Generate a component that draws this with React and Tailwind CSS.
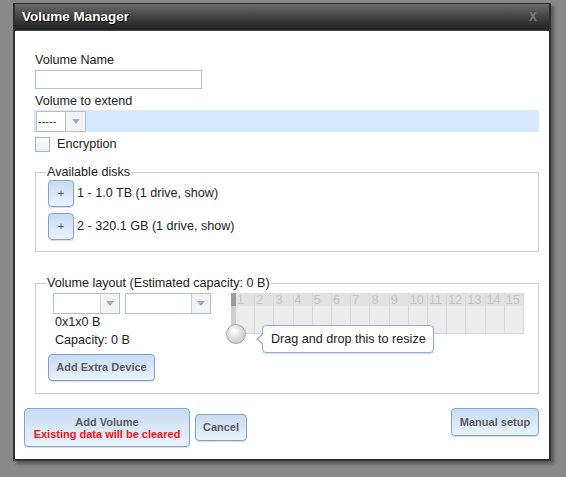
const FONT = { fontFamily: "'Liberation Sans', Arial, sans-serif" };

const btn =
  "border border-[#7fa3cb] rounded-[4px] bg-gradient-to-b from-[#c7dbf2] to-[#eaf3fd] shadow-[0_1px_1px_rgba(0,0,0,0.15)] text-[#5b5b5b] font-bold text-[11px] whitespace-nowrap";

function Arrow() {
  return (
    <svg width="8" height="5" viewBox="0 0 8 5">
      <path d="M0 0h8L4 5z" fill="#9aaec6" />
    </svg>
  );
}

function Select({ w, text }) {
  return (
    <div className="flex h-[21px] border border-[#b8bec9] bg-white" style={{ width: w }}>
      <div className="flex-1 text-[11px] leading-[19px] pl-[2px] text-[#333]">{text}</div>
      <div className="w-[19px] flex items-center justify-center bg-[#f3f3f3] border-l border-[#cfd3d8]">
        <Arrow />
      </div>
    </div>
  );
}

export default function App() {
  const cols = Array.from({ length: 15 }, (_, i) => i + 1);
  return (
    <div className="w-[566px] h-[477px] bg-[#898989] pt-[3px] pl-[13px] overflow-hidden" style={FONT}>
      <div className="w-[538px] h-[458px] border-[2px] border-[#2f2f2f] border-t-[1px] bg-white shadow-[3px_3px_3px_rgba(0,0,0,0.35)] flex flex-col">
        {/* title bar */}
        <div className="h-[27px] bg-gradient-to-b from-[#6a6a6a] to-[#202020] flex items-center justify-between pl-[7px] pr-[12px] border-b border-[#444]">
          <span className="text-white font-bold text-[13.5px] [text-shadow:1px_1px_1px_#000]">Volume Manager</span>
          <span className="text-[#7a7a7a] font-bold text-[12px]">X</span>
        </div>

        {/* body */}
        <div className="flex-1 flex flex-col pl-[20px] pr-[10px] text-[12.6px] text-[#222] whitespace-nowrap">
          <div className="mt-[22px] leading-[15px]">Volume Name</div>
          <div className="mt-[2px] w-[167px] h-[19px] border border-[#b8bec9]" />
          <div className="mt-[5px] leading-[15px]">Volume to extend</div>
          <div className="mt-[1px] -ml-[1px] h-[22px] bg-[#d6e9fc] flex items-center pl-[2px]">
            <div className="flex h-[21px] border border-[#b8bec9] bg-white w-[50px]">
              <div className="flex-1 text-[11px] leading-[18px] pl-[1px] text-[#333] border-r border-[#b8bec9]">-----</div>
              <div className="w-[19px] flex items-center justify-center bg-[#f3f3f3]">
                <Arrow />
              </div>
            </div>
          </div>
          <div className="mt-[5px] flex items-center gap-[7px]">
            <div className="w-[15px] h-[15px] border border-[#a9b3c2] bg-gradient-to-b from-white to-[#e8eef5]" />
            <span className="leading-[15px]">Encryption</span>
          </div>

          {/* available disks */}
          <fieldset className="mt-[14px] border border-[#cfcfcf] h-[86px] px-[12px]">
            <legend className="ml-[-2px] px-[1px] leading-[13px]">Available disks</legend>
            {["1 - 1.0 TB (1 drive, show)", "2 - 320.1 GB (1 drive, show)"].map((t, i) => (
              <div key={t} className={`flex items-center gap-[3px] ${i ? "mt-[6px]" : "mt-[1px]"}`}>
                <div className={`${btn} w-[26px] h-[27px] flex items-center justify-center font-normal text-[#555]`}>+</div>
                <span>{t}</span>
              </div>
            ))}
          </fieldset>

          {/* volume layout */}
          <fieldset className="mt-[25px] border border-[#cfcfcf] h-[117px] px-[12px]">
            <legend className="ml-[-2px] px-[1px] leading-[13px]">Volume layout (Estimated capacity: 0 B)</legend>
            <div className="flex">
              <div className="w-[183px] flex flex-col">
                <div className="flex gap-[5px] ml-[5px] mt-[3px]">
                  <Select w="67px" text="" />
                  <Select w="86px" text="" />
                </div>
                <div className="ml-[7px] mt-[1px] leading-[15px]">0x1x0 B</div>
                <div className="ml-[7px] mt-[3px] leading-[15px]">Capacity: 0 B</div>
                <div className={`${btn} mt-[6px] w-[107px] h-[27px] flex items-center justify-center`}>Add Extra Device</div>
              </div>
              <div className="relative mt-[3px]">
                <div className="flex w-[293px] h-[41px] bg-[#ececec] border-r border-b border-[#dadada]">
                  <div className="w-[5px] flex flex-col">
                    <div className="h-[13px] bg-[#9c9c9c]" />
                    <div className="flex-1 bg-[#cfcfcf]" />
                  </div>
                  {cols.map((n) => (
                    <div key={n} className="flex-1 flex flex-col border-r border-[#d8d8d8] last:border-r-0">
                      <div className="h-[13px] bg-[#e2e2e2] text-[12.5px] leading-[14px] text-[#c4c4c4] pl-[1px]">{n}</div>
                      <div className="flex-1" />
                    </div>
                  ))}
                </div>
                <div className="absolute left-[-5px] top-[31px] w-[20px] h-[20px] rounded-full border border-[#a9a9a9] bg-[radial-gradient(circle_at_40%_35%,#ffffff,#d4d4d4_60%,#bdbdbd)]" />
                <div className="absolute left-[31px] top-[32px] w-[172px] h-[28px] bg-white border border-[#8fb1d8] rounded-[4px] shadow-[0_1px_2px_rgba(0,0,0,0.15)] flex items-center pl-[8px] text-[12.6px] text-[#222]">
                  <div className="absolute left-[-7px] top-[7px] w-0 h-0 border-y-[6px] border-y-transparent border-r-[7px] border-r-[#8fb1d8]" />
                  <div className="absolute left-[-5px] top-[8px] w-0 h-0 border-y-[5px] border-y-transparent border-r-[6px] border-r-white" />
                  Drag and drop this to resize
                </div>
              </div>
            </div>
          </fieldset>

          {/* buttons */}
          <div className="mt-[14px] -ml-[11px] flex items-start">
            <div className={`${btn} w-[166px] h-[39px] flex flex-col items-center justify-center leading-[12px]`}>
              <span>Add Volume</span>
              <span className="text-[#f01414]">Existing data will be cleared</span>
            </div>
            <div className={`${btn} ml-[5px] mt-[6px] w-[52px] h-[27px] flex items-center justify-center`}>Cancel</div>
            <div className={`${btn} ml-auto w-[88px] h-[28px] flex items-center justify-center`}>Manual setup</div>
          </div>
        </div>
      </div>
    </div>
  );
}
